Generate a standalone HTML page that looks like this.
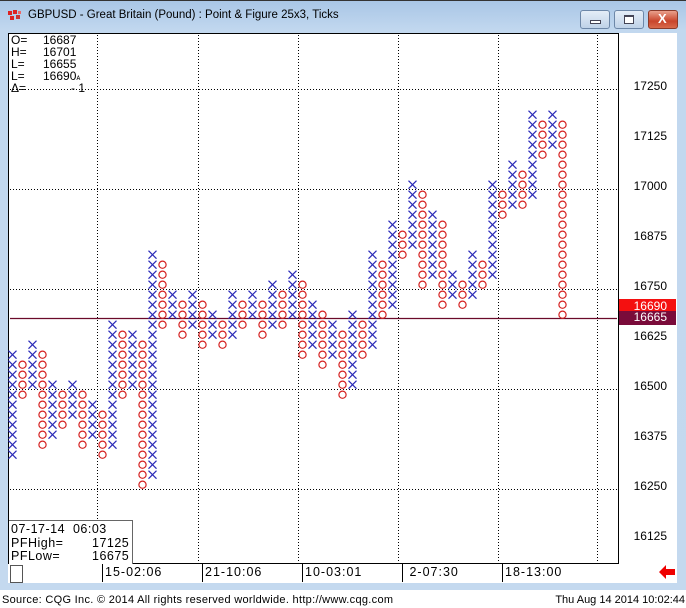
<!DOCTYPE html>
<html><head><meta charset="utf-8">
<style>
*{margin:0;padding:0;box-sizing:border-box}
body{width:686px;height:608px;overflow:hidden;background:#fff;font-family:"Liberation Sans",Arial,sans-serif;position:relative}
.frame{position:absolute;left:0;top:0;width:686px;height:590px;background:linear-gradient(#a9c6e6,#c2d8ef 30px,#c4d9ef);border-top:1px solid #333}
.title{position:absolute;left:28px;top:9px;font-size:11.5px;color:#000}
.btn{position:absolute;top:10px;height:19px;border:1px solid #6d87a8;border-radius:3px;background:linear-gradient(#e4edf7,#bfd2e8)}
.chart{position:absolute;left:8px;top:33px;width:611px;height:531px;background:#fff;border:1.5px solid #000}
.rax{position:absolute;left:619px;top:33px;width:58px;height:550px;background:#fff}
.tax{position:absolute;left:8px;top:564px;width:611px;height:19px;background:#fff}
.lbl{position:absolute;right:10px;font-size:12px;color:#000}
.info{position:absolute;font-size:12px;line-height:12px;color:#000}
.tl{position:absolute;top:564px;height:18px;border-left:1px solid #000;font-size:12.5px;letter-spacing:1px;padding-left:2px;padding-top:1px}
.status{position:absolute;top:594px;font-size:11px;color:#000}
</style></head><body>
<div class="frame"></div>
<svg style="position:absolute;left:8px;top:10px" width="16" height="14"><rect x="0" y="1" width="4" height="4" fill="#d22"/><rect x="5" y="0" width="4" height="4" fill="#d22"/><rect x="2" y="6" width="4" height="4" fill="#d22"/><rect x="8" y="5" width="4" height="4" fill="#c33"/><rect x="10" y="1" width="3" height="3" fill="#e66"/></svg>
<div class="title">GBPUSD - Great Britain (Pound) : Point &amp; Figure 25x3, Ticks</div>
<div class="btn" style="left:580px;width:30px"><div style="position:absolute;left:9px;top:9px;width:11px;height:4px;border:1px solid #445;background:#fff"></div></div>
<div class="btn" style="left:614px;width:30px"><div style="position:absolute;left:9px;top:4px;width:10px;height:9px;border:1px solid #445;border-top-width:2px;background:#fff"></div></div>
<div class="btn" style="left:648px;width:30px;background:linear-gradient(#e9a08c,#c9452c 60%,#d96a4c);border-color:#8a3a2a"><div style="position:absolute;left:9px;top:0px;color:#fff;font-weight:bold;font-size:13px">X</div></div>
<div class="rax"></div>
<div class="tax"></div>
<div class="chart"></div>
<svg id="g" style="position:absolute;left:0;top:0" width="686" height="608">
<g stroke="#000" stroke-width="1" stroke-dasharray="1,2">
<line x1="97.5" y1="35" x2="97.5" y2="563"/><line x1="198.5" y1="35" x2="198.5" y2="563"/><line x1="298.5" y1="35" x2="298.5" y2="563"/><line x1="398.5" y1="35" x2="398.5" y2="563"/><line x1="498.5" y1="35" x2="498.5" y2="563"/><line x1="597.5" y1="35" x2="597.5" y2="563"/>
<line x1="10" y1="89.5" x2="617" y2="89.5"/><line x1="10" y1="189.5" x2="617" y2="189.5"/><line x1="10" y1="289.5" x2="617" y2="289.5"/><line x1="10" y1="389.5" x2="617" y2="389.5"/><line x1="10" y1="489.5" x2="617" y2="489.5"/>
</g>
<line x1="10" y1="318.5" x2="617" y2="318.5" stroke="#6b0a2a" stroke-width="1.3"/>
<g id="m" fill="none" stroke-width="1.2"></g>
<polygon points="659,572 666,565 666,569 675,569 675,575 666,575 666,579" fill="#e00"/>
</svg>
<div class="info" style="left:11px;top:34px;width:85px">
<div>O=<span style="position:absolute;left:32px">16687</span></div>
<div>H=<span style="position:absolute;left:32px">16701</span></div>
<div>L=<span style="position:absolute;left:32px">16655</span></div>
<div>L=<span style="position:absolute;left:32px">16690<span style="font-size:8px">ᴀ</span></span></div>
<div>Δ=<span style="position:absolute;left:60px">- 1</span></div>
</div>
<div style="position:absolute;left:9px;top:520px;width:124px;height:44px;background:#fff;border:1px solid #666;border-left:none;border-bottom:none"></div>
<div class="info" style="left:11px;top:523px;line-height:13.5px;font-size:12.5px;letter-spacing:0.5px">
<div>07-17-14&nbsp; 06:03</div>
<div>PFHigh=<span style="position:absolute;left:81px">17125</span></div>
<div>PFLow=<span style="position:absolute;left:81px">16675</span></div>
</div>
<div style="position:absolute;left:10px;top:565px;width:13px;height:18px;border:1px solid #555;background:#fff"></div>
<div class="tl" style="left:102px">15-02:06</div>
<div class="tl" style="left:202px">21-10:06</div>
<div class="tl" style="left:302px">10-03:01</div>
<div class="tl" style="left:402px">&nbsp;2-07:30</div>
<div class="tl" style="left:502px">18-13:00</div>
<div style="position:absolute;left:619px;top:299px;width:57px;height:12px;background:#f41010"></div>
<div style="position:absolute;left:619px;top:311px;width:57px;height:14px;background:#7a0b3a"></div>
<div style="position:absolute;left:619px;top:33px;width:58px;height:530px">
<div class="lbl" style="top:46px">17250</div>
<div class="lbl" style="top:96px">17125</div>
<div class="lbl" style="top:146px">17000</div>
<div class="lbl" style="top:196px">16875</div>
<div class="lbl" style="top:246px">16750</div>
<div class="lbl" style="top:266px;color:#fff">16690</div>
<div class="lbl" style="top:277px;color:#fff">16665</div>
<div class="lbl" style="top:296px">16625</div>
<div class="lbl" style="top:346px">16500</div>
<div class="lbl" style="top:396px">16375</div>
<div class="lbl" style="top:446px">16250</div>
<div class="lbl" style="top:496px">16125</div>
</div>
<div class="status" style="left:2px;letter-spacing:0.3px">Source: CQG Inc. © 2014 All rights reserved worldwide. http://www.cqg.com</div>
<div class="status" style="right:1px">Thu Aug 14 2014 10:02:44</div>
<script>
var c=[[10,20],[11,14],[9,13],[10,19],[13,18],[14,17],[13,16],[14,19],[15,18],[16,20],[7,19],[8,14],[8,13],[9,23],[0,22],[1,7],[4,6],[5,8],[4,7],[5,9],[6,8],[7,9],[4,8],[5,7],[4,6],[5,8],[3,7],[4,7],[2,6],[3,10],[5,9],[6,11],[7,10],[8,14],[6,13],[7,10],[0,9],[1,6],[-3,5],[-2,0],[-7,-1],[-6,3],[-4,2],[-3,5],[2,4],[3,5],[0,4],[1,3],[-7,2],[-6,-4],[-9,-5],[-8,-5],[-14,-6],[-13,-10],[-14,-11],[-13,6]];
var s='';
for(var i=0;i<c.length;i++){var x=12.5+10*i;for(var r=c[i][0];r<=c[i][1];r++){var y=254.7+10*r;
if(i%2==0)s+='<path d="M'+(x-4)+' '+(y-4)+'L'+(x+4)+' '+(y+4)+'M'+(x+4)+' '+(y-4)+'L'+(x-4)+' '+(y+4)+'" stroke="#2a2ab8"/>';
else s+='<circle cx="'+x+'" cy="'+y+'" r="3.6" stroke="#d42020"/>';}}
document.getElementById('m').innerHTML=s;
</script>
</body></html>
